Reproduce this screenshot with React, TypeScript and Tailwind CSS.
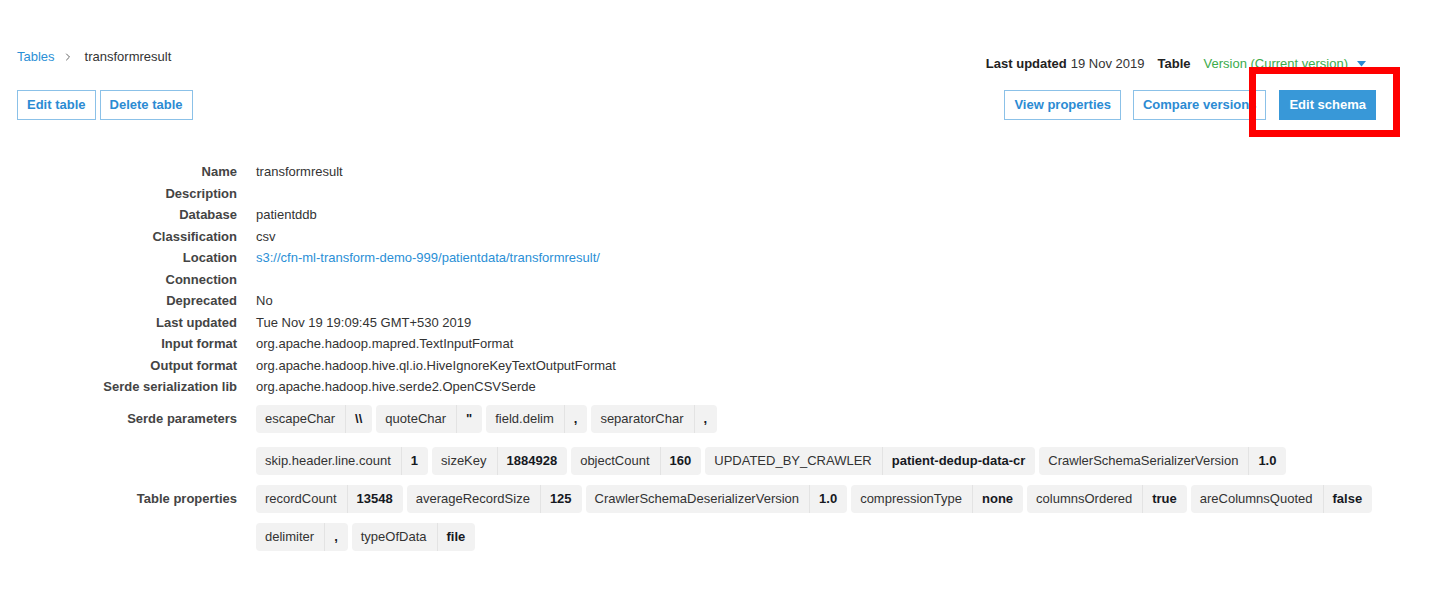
import { ChevronRight } from 'lucide-react';

const details: [string, string, boolean?][] = [
  ['Name', 'transformresult'],
  ['Description', ''],
  ['Database', 'patientddb'],
  ['Classification', 'csv'],
  ['Location', 's3://cfn-ml-transform-demo-999/patientdata/transformresult/', true],
  ['Connection', ''],
  ['Deprecated', 'No'],
  ['Last updated', 'Tue Nov 19 19:09:45 GMT+530 2019'],
  ['Input format', 'org.apache.hadoop.mapred.TextInputFormat'],
  ['Output format', 'org.apache.hadoop.hive.ql.io.HiveIgnoreKeyTextOutputFormat'],
  ['Serde serialization lib', 'org.apache.hadoop.hive.serde2.OpenCSVSerde'],
];

const serdeParams: [string, string][] = [
  ['escapeChar', '\\\\'],
  ['quoteChar', '"'],
  ['field.delim', ','],
  ['separatorChar', ','],
];

const tableProps: [string, string][] = [
  ['skip.header.line.count', '1'],
  ['sizeKey', '1884928'],
  ['objectCount', '160'],
  ['UPDATED_BY_CRAWLER', 'patient-dedup-data-cr'],
  ['CrawlerSchemaSerializerVersion', '1.0'],
  ['recordCount', '13548'],
  ['averageRecordSize', '125'],
  ['CrawlerSchemaDeserializerVersion', '1.0'],
  ['compressionType', 'none'],
  ['columnsOrdered', 'true'],
  ['areColumnsQuoted', 'false'],
  ['delimiter', ','],
  ['typeOfData', 'file'],
];

function Chip({ k, v }: { k: string; v: string }) {
  return (
    <div className="flex h-7 items-stretch rounded-[4px] bg-[#f2f2f2]">
      <span className="flex items-center pl-[9px] pr-[10px]">{k}</span>
      <span className="flex items-center border-l border-[#e3e3e3] pl-[9px] pr-[10px] font-bold text-[#16191f]">
        {v}
      </span>
    </div>
  );
}

function OutlineButton({ children }: { children: React.ReactNode }) {
  return (
    <button className="h-[30px] border border-[#8bc1e8] bg-white px-[9px] text-[13px] font-bold text-[#2b8bd3]">
      {children}
    </button>
  );
}

export default function App() {
  return (
    <div className="relative min-h-[590px] w-[1444px] bg-white font-['Liberation_Sans',Helvetica,Arial,sans-serif] text-[13px] text-[#333]">
      <div className="pl-[17px] pr-[68px] pt-[48px]">
        <div className="flex items-start justify-between">
          <div className="flex h-[18px] items-center leading-[18px]">
            <span className="text-[#2b8fd6]">Tables</span>
            <ChevronRight className="ml-[7px] mr-[11px] h-3 w-3 text-[#666]" strokeWidth={2} />
            <span className="text-[#333]">transformresult</span>
          </div>
          <div className="mr-[10px] mt-[7px] flex h-[18px] items-center leading-[18px]">
            <span className="font-bold text-[#222]">Last updated</span>
            <span className="ml-[4px]">19 Nov 2019</span>
            <span className="ml-[13px] font-bold text-[#222]">Table</span>
            <span className="ml-[13px] text-[#3cab4b]">Version (Current version)</span>
            <svg className="ml-[9px]" width="9" height="6" viewBox="0 0 9 6">
              <path d="M0 0 L9 0 L4.5 5.5 Z" fill="#2b8bd3" />
            </svg>
          </div>
        </div>

        <div className="mt-[17px] flex items-center justify-between">
          <div className="flex gap-1">
            <OutlineButton>Edit table</OutlineButton>
            <OutlineButton>Delete table</OutlineButton>
          </div>
          <div className="flex gap-3">
            <OutlineButton>View properties</OutlineButton>
            <OutlineButton>Compare versions</OutlineButton>
            <button className="ml-px h-[30px] bg-[#3898d8] px-[10px] text-[13px] font-bold text-white">
              Edit schema
            </button>
          </div>
        </div>
      </div>

      <div className="mt-[41px]">
        {details.map(([label, value, link]) => (
          <div key={label} className="flex leading-[21.5px]">
            <div className="w-[237px] shrink-0 text-right font-bold text-[#444]">{label}</div>
            <div className={`pl-[19px] ${link ? 'text-[#2b8fd6]' : 'text-[#333]'}`}>{value}</div>
          </div>
        ))}

        <div className="mt-[7px] flex items-center">
          <div className="w-[237px] shrink-0 text-right font-bold text-[#444]">Serde parameters</div>
          <div className="flex flex-wrap gap-x-1 gap-y-[10px] pl-[19px]">
            {serdeParams.map(([k, v]) => (
              <Chip key={k} k={k} v={v} />
            ))}
          </div>
        </div>

        <div className="mt-[14px] flex items-center">
          <div className="w-[237px] shrink-0 text-right font-bold text-[#444]">Table properties</div>
          <div className="flex w-[1159px] flex-wrap gap-x-1 gap-y-[10px] pl-[19px]">
            {tableProps.map(([k, v]) => (
              <Chip key={k} k={k} v={v} />
            ))}
          </div>
        </div>
      </div>

      <div className="absolute left-[1249px] top-[67px] h-[70px] w-[151px] border-[7px] border-[#ff0000]" />
    </div>
  );
}
